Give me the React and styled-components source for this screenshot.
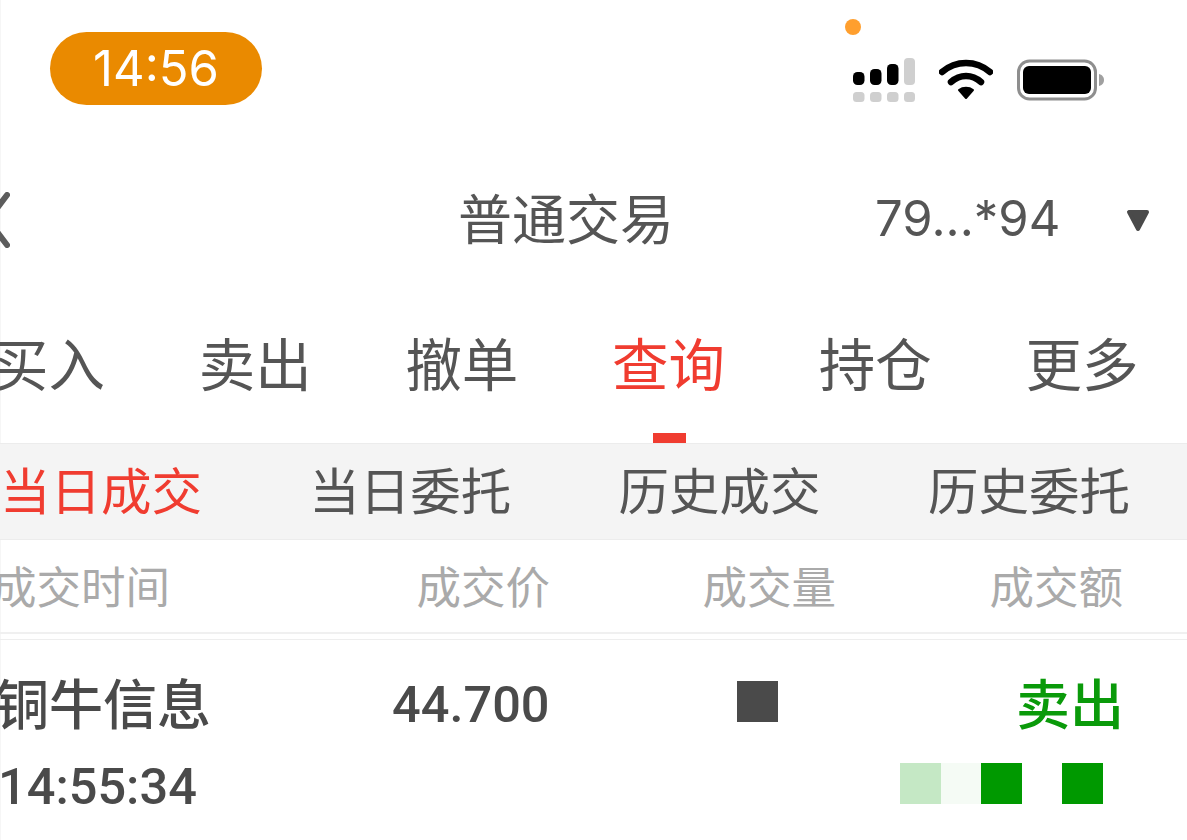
import styled, { createGlobalStyle } from "styled-components";

const GlobalStyle = createGlobalStyle`
    html, body {
        margin: 0;
        padding: 0;
        background: #fff;
    }
    body {
        font-family: "Noto Sans CJK SC", "Noto Sans", sans-serif;
    }
`;

const MAIN_TABS = ["买入", "卖出", "撤单", "查询", "持仓", "更多"];
const SUB_TABS = ["当日成交", "当日委托", "历史成交", "历史委托"];
const TICKS = [
    { color: "#c5e8c5" },
    { color: "#f5fbf5" },
    { color: "#009900" },
    { color: "transparent" },
    { color: "#009900" },
];

const SignalIcon = () => (
    <svg width="64" height="46" viewBox="0 0 64 46">
        <rect x="1" y="15" width="11.5" height="13" rx="4.5" fill="#000" />
        <rect x="18" y="12" width="11.5" height="16" rx="4.5" fill="#000" />
        <rect x="35" y="7" width="11.5" height="21" rx="4.5" fill="#000" />
        <rect x="52" y="1" width="11" height="27" rx="4" fill="#cfcfcf" />
        <rect x="1" y="35" width="11.5" height="10" rx="3.5" fill="#cfcfcf" />
        <rect x="18" y="35" width="11.5" height="10" rx="3.5" fill="#cfcfcf" />
        <rect x="35" y="35" width="11.5" height="10" rx="3.5" fill="#cfcfcf" />
        <rect x="52" y="35" width="11" height="10" rx="3.5" fill="#cfcfcf" />
    </svg>
);

const WifiIcon = () => (
    <svg width="54" height="42" viewBox="0 0 54 42">
        <path d="M3 13 C17 1 37 1 51 13" fill="none" stroke="#000" strokeWidth="6.5" strokeLinecap="round" />
        <path d="M12 23 C21 15 33 15 42 23" fill="none" stroke="#000" strokeWidth="6.5" strokeLinecap="round" />
        <path d="M20 31 C24 28 30 28 34 31 L27 39 Z" fill="#000" stroke="#000" strokeWidth="2" strokeLinejoin="round" />
    </svg>
);

const BatteryIcon = () => (
    <svg width="88" height="42" viewBox="0 0 88 42">
        <rect x="2.5" y="2" width="77" height="38" rx="11" fill="none" stroke="#8e8e8e" strokeWidth="3" />
        <rect x="7" y="7" width="68" height="28" rx="6" fill="#000" />
        <path d="M83 15 C87 16 88 19 88 21 C88 23 87 26 83 27 Z" fill="#a0a0a0" />
    </svg>
);

const BackIcon = () => (
    <svg width="10" height="56" viewBox="0 0 10 56">
        <path d="M7 3 L-12 28 L7 53" fill="none" stroke="#5c5c5c" strokeWidth="6" strokeLinecap="round" />
    </svg>
);

const CaretIcon = () => (
    <svg width="24" height="23" viewBox="0 0 24 23">
        <path d="M3 3 L21 3 L12 20 Z" fill="#4a4a4a" stroke="#4a4a4a" strokeWidth="4" strokeLinejoin="round" />
    </svg>
);

const App = () => {
    return (
        <Page>
            <GlobalStyle />
            <StatusBar>
                <TimePill>14:56</TimePill>
                <StatusIcons>
                    <RecordingDot />
                    <SignalIcon />
                    <WifiIcon />
                    <BatteryIcon />
                </StatusIcons>
            </StatusBar>

            <NavBar>
                <BackSlot><BackIcon /></BackSlot>
                <NavTitle>普通交易</NavTitle>
                <Account>79...*94</Account>
                <CaretSlot><CaretIcon /></CaretSlot>
            </NavBar>

            <MainTabs>
                {MAIN_TABS.map((tab) => (
                    <MainTab key={tab} $active={tab === "查询"}>{tab}</MainTab>
                ))}
            </MainTabs>

            <SubTabs>
                {SUB_TABS.map((tab, index) => (
                    <SubTab key={tab} $active={index === 0}>{tab}</SubTab>
                ))}
            </SubTabs>

            <TableHead>
                <HeadCell $width={178} $align="left">成交时间</HeadCell>
                <HeadCell $width={380} $align="right">成交价</HeadCell>
                <HeadCell $width={286} $align="right">成交量</HeadCell>
                <HeadCell $width={287} $align="right">成交额</HeadCell>
            </TableHead>

            <TradeRow>
                <RowLine>
                    <StockName>铜牛信息</StockName>
                    <Price>44.700</Price>
                    <MaskedCell />
                    <Side>卖出</Side>
                </RowLine>
                <RowLine>
                    <TradeTime>14:55:34</TradeTime>
                    <Ticks>
                        {TICKS.map((tick, index) => (
                            <Tick key={index} $color={tick.color} />
                        ))}
                    </Ticks>
                </RowLine>
            </TradeRow>
        </Page>
    );
};

const Page = styled.div`
    width: 1187px;
    height: 840px;
    overflow: hidden;
    background: #fff;
    box-shadow: inset 1px 0 0 #f6f6f6;
`;

const StatusBar = styled.div`
    height: 140px;
    box-sizing: border-box;
    padding: 32px 83px 0 50px;
    display: flex;
    justify-content: space-between;
    align-items: flex-start;
`;

const TimePill = styled.div`
    width: 212px;
    height: 73px;
    border-radius: 37px;
    background: #ea8a00;
    color: #fff;
    font-family: Inter, sans-serif;
    font-size: 49px;
    line-height: 73px;
    text-align: center;
`;

const StatusIcons = styled.div`
    position: relative;
    display: flex;
    align-items: center;
    gap: 23px;
    margin-top: 25px;
`;

const RecordingDot = styled.span`
    position: absolute;
    left: -7px;
    top: -38px;
    width: 16px;
    height: 16px;
    border-radius: 50%;
    background: #ff9f2e;
`;

const NavBar = styled.div`
    height: 156px;
    display: flex;
    align-items: center;
    padding-bottom: 2px;
    box-sizing: border-box;
    color: #555;
`;

const BackSlot = styled.div`
    width: 10px;
    display: flex;
    margin: 6px 448px 0 0;
`;

const NavTitle = styled.div`
    width: 214px;
    font-size: 54px;
    line-height: 70px;
    white-space: nowrap;
`;

const Account = styled.div`
    margin-left: 203px;
    padding-top: 4px;
    width: 184px;
    font-family: Inter, sans-serif;
    font-size: 49px;
    line-height: 70px;
    white-space: nowrap;
`;

const CaretSlot = styled.div`
    margin: 6px 0 0 67px;
    display: flex;
`;

const MainTabs = styled.div`
    height: 147px;
    box-sizing: border-box;
    margin-left: -8px;
    display: grid;
    grid-template-columns: repeat(6, 206.7px);
    align-items: stretch;
`;

const MainTab = styled.div`
    position: relative;
    width: 112px;
    padding-top: 28px;
    font-size: 56.5px;
    line-height: 74px;
    white-space: nowrap;
    color: ${(props) => (props.$active ? "#f03c30" : "#555")};

    &::after {
        content: "";
        display: ${(props) => (props.$active ? "block" : "none")};
        position: absolute;
        left: 41px;
        bottom: 0;
        width: 33px;
        height: 10px;
        background: #f03c30;
    }
`;

const SubTabs = styled.div`
    height: 97px;
    box-sizing: border-box;
    padding: 0 0 7px 0;
    background: #f4f4f4;
    border-top: 1px solid #ececec;
    border-bottom: 1px solid #ececec;
    display: grid;
    grid-template-columns: repeat(4, 309.3px);
    align-items: center;
`;

const SubTab = styled.div`
    font-size: 50.5px;
    line-height: 66px;
    white-space: nowrap;
    color: ${(props) => (props.$active ? "#f03c30" : "#555")};
`;

const TableHead = styled.div`
    height: 94px;
    box-sizing: border-box;
    margin-left: -8px;
    padding-bottom: 2px;
    border-bottom: 2px solid #f0f0f0;
    display: flex;
    align-items: center;
`;

const HeadCell = styled.div`
    width: ${(props) => props.$width}px;
    text-align: ${(props) => props.$align};
    font-size: 44.5px;
    line-height: 60px;
    white-space: nowrap;
    color: #aaa;
`;

const TradeRow = styled.div`
    border-top: 1px solid #eee;
    margin-top: 5px;
    padding-top: 32px;
    display: flex;
    flex-direction: column;
    gap: 21px;
`;

const RowLine = styled.div`
    display: flex;
    align-items: center;
    height: 60px;
`;

const StockName = styled.div`
    width: 397px;
    margin-left: -5px;
    font-size: 54px;
    font-weight: 500;
    line-height: 60px;
    white-space: nowrap;
    color: #4a4a4a;
`;

const Price = styled.div`
    width: 345px;
    padding-top: 6px;
    font-family: Roboto, sans-serif;
    font-size: 50.5px;
    font-weight: 500;
    line-height: 60px;
    color: #4a4a4a;
`;

const MaskedCell = styled.div`
    width: 41px;
    height: 41px;
    margin-bottom: 2px;
    background: #4a4a4a;
`;

const Side = styled.div`
    margin-left: 238px;
    font-size: 54px;
    font-weight: 500;
    line-height: 60px;
    white-space: nowrap;
    color: #0a9a0a;
`;

const TradeTime = styled.div`
    width: 902px;
    margin-left: -2px;
    padding-top: 8px;
    font-family: Roboto, sans-serif;
    font-size: 50.5px;
    font-weight: 500;
    line-height: 60px;
    color: #4a4a4a;
`;

const Ticks = styled.div`
    display: flex;
`;

const Tick = styled.span`
    width: 40.6px;
    height: 41px;
    background: ${(props) => props.$color};
`;

export default App;
